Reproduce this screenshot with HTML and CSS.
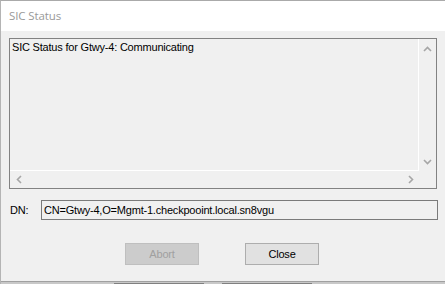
FILE: index.html
```html
<!DOCTYPE html>
<html>
<head>
<meta charset="utf-8">
<link rel="stylesheet" href="styles.css">
</head>
<body>
<div class="window">
  <div class="titlebar">SIC Status</div>
  <div class="client">
    <div class="textbox">
      <div class="content">SIC Status for Gtwy-4: Communicating</div>
      <div class="vscroll">
        <svg class="arrow" width="9" height="6" viewBox="0 0 9 6"><path d="M1 5 L4.5 1.5 L8 5" fill="none" stroke="#a6a6a6" stroke-width="1.6"/></svg>
        <svg class="arrow" width="9" height="6" viewBox="0 0 9 6"><path d="M1 1 L4.5 4.5 L8 1" fill="none" stroke="#a6a6a6" stroke-width="1.6"/></svg>
      </div>
      <div class="hscroll">
        <svg class="arrow" width="6" height="9" viewBox="0 0 6 9"><path d="M5 1 L1.5 4.5 L5 8" fill="none" stroke="#a6a6a6" stroke-width="1.6"/></svg>
        <svg class="arrow" width="6" height="9" viewBox="0 0 6 9"><path d="M1 1 L4.5 4.5 L1 8" fill="none" stroke="#a6a6a6" stroke-width="1.6"/></svg>
      </div>
      <div class="corner"></div>
    </div>
    <div class="dnrow">
      <span class="dnlabel">DN:</span>
      <div class="dnbox">CN=Gtwy-4,O=Mgmt-1.checkpooint.local.sn8vgu</div>
    </div>
    <div class="buttons">
      <div class="btn disabled">Abort</div>
      <div class="btn">Close</div>
    </div>
  </div>
  <div class="bottomline"></div>
  <div class="behind">
    <div class="bar"></div>
    <div class="bar"></div>
  </div>
</div>
</body>
</html>
```

FILE: styles.css
```css
html, body {
  margin: 0;
  padding: 0;
  background: #f0f0f0;
  overflow: hidden;
}
.window {
  width: 445px;
  height: 284px;
  display: flex;
  flex-direction: column;
  border-top: 1px solid #aaaaaa;
  border-left: 1px solid #b4b4b4;
  box-sizing: border-box;
  font-family: "Liberation Sans", Arial, sans-serif;
  font-size: 11px;
  letter-spacing: -0.2px;
  color: #000;
}
.titlebar {
  height: 30px;
  background: #fff;
  color: #999999;
  font-family: "Open Sans", "Noto Sans", sans-serif;
  font-size: 11.5px;
  line-height: 30px;
  padding-left: 8px;
  letter-spacing: -0.1px;
}
.client {
  height: 250px;
  background: #f0f0f0;
  padding: 7px 0 0 8px;
  box-sizing: border-box;
}
.textbox {
  width: 428px;
  height: 151px;
  box-sizing: border-box;
  border: 1px solid #828282;
  display: grid;
  grid-template-columns: 409px 17px;
  grid-template-rows: 132px 17px;
}
.content {
  border-right: 1px solid #ffffff;
  border-bottom: 1px solid #ffffff;
  padding: 2px 0 0 2px;
  line-height: 13px;
}
.vscroll {
  display: flex;
  flex-direction: column;
  justify-content: space-between;
  align-items: center;
  padding: 7px 0 6px;
}
.hscroll {
  display: flex;
  justify-content: space-between;
  align-items: center;
  padding: 0 5px 0 6px;
}
.arrow {
  display: block;
}
.dnrow {
  display: flex;
  align-items: center;
  margin-top: 11px;
  height: 20px;
}
.dnlabel {
  width: 31px;
  padding-left: 1px;
}
.dnbox {
  width: 397px;
  height: 20px;
  box-sizing: border-box;
  border: 1px solid #7a7a7a;
  padding-left: 2px;
  line-height: 18px;
}
.buttons {
  display: flex;
  gap: 46px;
  margin-top: 23px;
  padding-left: 116px;
}
.btn {
  width: 74px;
  height: 22px;
  box-sizing: border-box;
  border: 1px solid #adadad;
  background: #e1e1e1;
  text-align: center;
  line-height: 20px;
}
.btn.disabled {
  background: #cccccc;
  border-color: #bfbfbf;
  color: #a0a0a0;
}
.bottomline {
  height: 1px;
  background: #a0a0a0;
}
.behind {
  height: 2px;
  background: #c8c8c8;
  display: flex;
  gap: 18px;
  padding-left: 113px;
  align-items: flex-end;
}
.bar {
  width: 90px;
  height: 1px;
  background: #808080;
}
```
